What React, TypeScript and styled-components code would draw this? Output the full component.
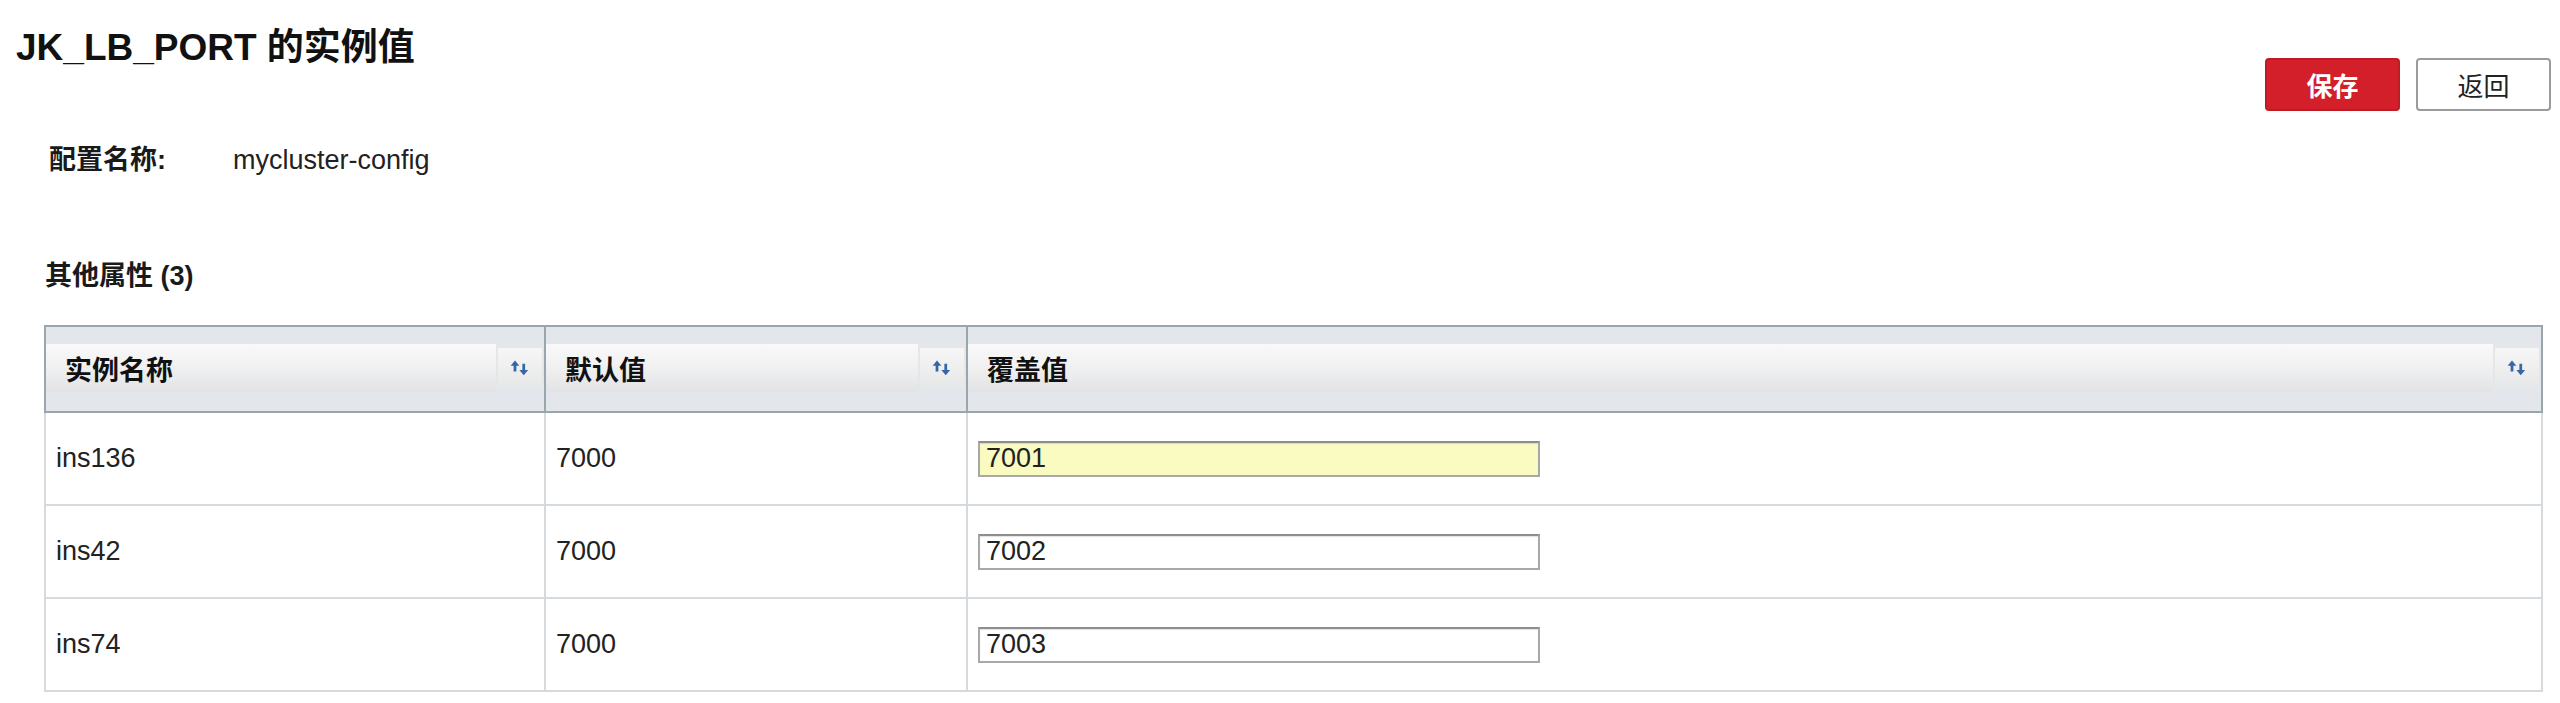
import React from "react";
import styled, { createGlobalStyle } from "styled-components";

const GlobalStyle = createGlobalStyle`
  html, body {
    margin: 0;
    padding: 0;
    background: #ffffff;
  }
  body {
    font-family: "Liberation Sans", "Noto Sans CJK SC", sans-serif;
    color: #1a1a1a;
  }
  * { box-sizing: border-box; }
`;

const Page = styled.div`
  width: 100%;
`;

const TopBar = styled.div`
  display: flex;
  justify-content: space-between;
  align-items: flex-start;
  padding: 26px 9px 0 16px;
`;

const Title = styled.h1`
  margin: 0;
  font-size: 37px;
  line-height: 44px;
  font-weight: bold;
  color: #111;
`;

const Actions = styled.div`
  display: flex;
  gap: 16px;
  margin-top: 32px;
`;

const Button = styled.button<{ $primary?: boolean }>`
  width: 135px;
  height: 53px;
  border-radius: 4px;
  font-family: "Liberation Sans", "Noto Sans CJK SC", sans-serif;
  font-size: 26px;
  cursor: pointer;
  border: 2px solid ${(p) => (p.$primary ? "#c01b24" : "#9b9b9b")};
  background: ${(p) => (p.$primary ? "#d31f29" : "#ffffff")};
  color: ${(p) => (p.$primary ? "#ffffff" : "#222")};
  font-weight: ${(p) => (p.$primary ? 600 : 400)};
`;

const Content = styled.div`
  padding: 0 17px 0 44px;
`;

const InfoRow = styled.div`
  display: flex;
  margin-top: 29px;
  padding-left: 5px;
  font-size: 27px;
  line-height: 40px;
`;

const InfoLabel = styled.span`
  width: 184px;
  font-weight: bold;
  color: #1a1a1a;
`;

const InfoValue = styled.span`
  color: #222;
`;

const SectionTitle = styled.h2`
  margin: 76px 0 0 0;
  padding-left: 1px;
  font-size: 27px;
  line-height: 40px;
  font-weight: bold;
  color: #1a1a1a;
`;

const Table = styled.table`
  margin-top: 29px;
  width: 100%;
  border-collapse: collapse;
  table-layout: fixed;
`;

const HeadCell = styled.th<{ $width?: number }>`
  width: ${(p) => (p.$width ? `${p.$width}px` : "auto")};
  padding: 17px 2px 19px 0;
  background: #e3e7eb;
  border: 2px solid #9ba5ad;
  text-align: left;
`;

const HeadInner = styled.div`
  display: flex;
  align-items: center;
  gap: 2px;
`;

const HeadLabel = styled.div`
  flex: 1;
  height: 48px;
  display: flex;
  align-items: center;
  padding-left: 19px;
  font-size: 27px;
  font-weight: bold;
  color: #111;
  background: linear-gradient(to bottom, #f9f9f9 0%, #f1f1f1 45%, #e2e3e5 100%);
`;

const SortButton = styled.div`
  width: 44px;
  height: 40px;
  display: flex;
  align-items: center;
  justify-content: center;
  background: linear-gradient(to bottom, #f6f6f6 0%, #eeeeee 55%, #e6e7e8 100%);
`;

const Row = styled.tr`
  height: 93px;
`;

const Cell = styled.td`
  padding: 0 10px;
  border: 2px solid #d5dadf;
  font-size: 27px;
  color: #222;
  vertical-align: middle;
`;

const ValueInput = styled.input<{ $highlight?: boolean }>`
  display: block;
  width: 562px;
  height: 36px;
  padding: 0 6px;
  border: 2px solid #a8a8a8;
  border-top-color: #8e8e8e;
  box-shadow: inset 0 1px 1px rgba(0, 0, 0, 0.12);
  background: ${(p) => (p.$highlight ? "#f9fbc1" : "#ffffff")};
  font-family: "Liberation Sans", "Noto Sans CJK SC", sans-serif;
  font-size: 27px;
  color: #222;
  outline: none;
`;

const SortIcon = () => (
  <svg width="20" height="18" viewBox="0 0 16 14" aria-hidden="true">
    <polygon points="0.5,5.2 4,1 7.5,5.2" fill="#3466a8" />
    <rect x="2.9" y="4.6" width="2.2" height="5.2" fill="#3466a8" />
    <rect x="9.9" y="3.6" width="2.2" height="5.6" fill="#3466a8" />
    <polygon points="7.5,8.6 11,12.8 14.5,8.6" fill="#3466a8" />
  </svg>
);

const columns = [
  { label: "实例名称", width: 500 },
  { label: "默认值", width: 422 },
  { label: "覆盖值" },
];

const rows = [
  { name: "ins136", def: "7000", value: "7001", highlight: true },
  { name: "ins42", def: "7000", value: "7002" },
  { name: "ins74", def: "7000", value: "7003" },
];

export default function App() {
  return (
    <Page>
      <GlobalStyle />
      <TopBar>
        <Title>JK_LB_PORT 的实例值</Title>
        <Actions>
          <Button $primary>保存</Button>
          <Button>返回</Button>
        </Actions>
      </TopBar>
      <Content>
        <InfoRow>
          <InfoLabel>配置名称:</InfoLabel>
          <InfoValue>mycluster-config</InfoValue>
        </InfoRow>
        <SectionTitle>其他属性 (3)</SectionTitle>
        <Table>
          <thead>
            <tr>
              {columns.map((c) => (
                <HeadCell key={c.label} $width={c.width}>
                  <HeadInner>
                    <HeadLabel>{c.label}</HeadLabel>
                    <SortButton>
                      <SortIcon />
                    </SortButton>
                  </HeadInner>
                </HeadCell>
              ))}
            </tr>
          </thead>
          <tbody>
            {rows.map((r) => (
              <Row key={r.name}>
                <Cell>{r.name}</Cell>
                <Cell>{r.def}</Cell>
                <Cell>
                  <ValueInput defaultValue={r.value} $highlight={r.highlight} />
                </Cell>
              </Row>
            ))}
          </tbody>
        </Table>
      </Content>
    </Page>
  );
}
